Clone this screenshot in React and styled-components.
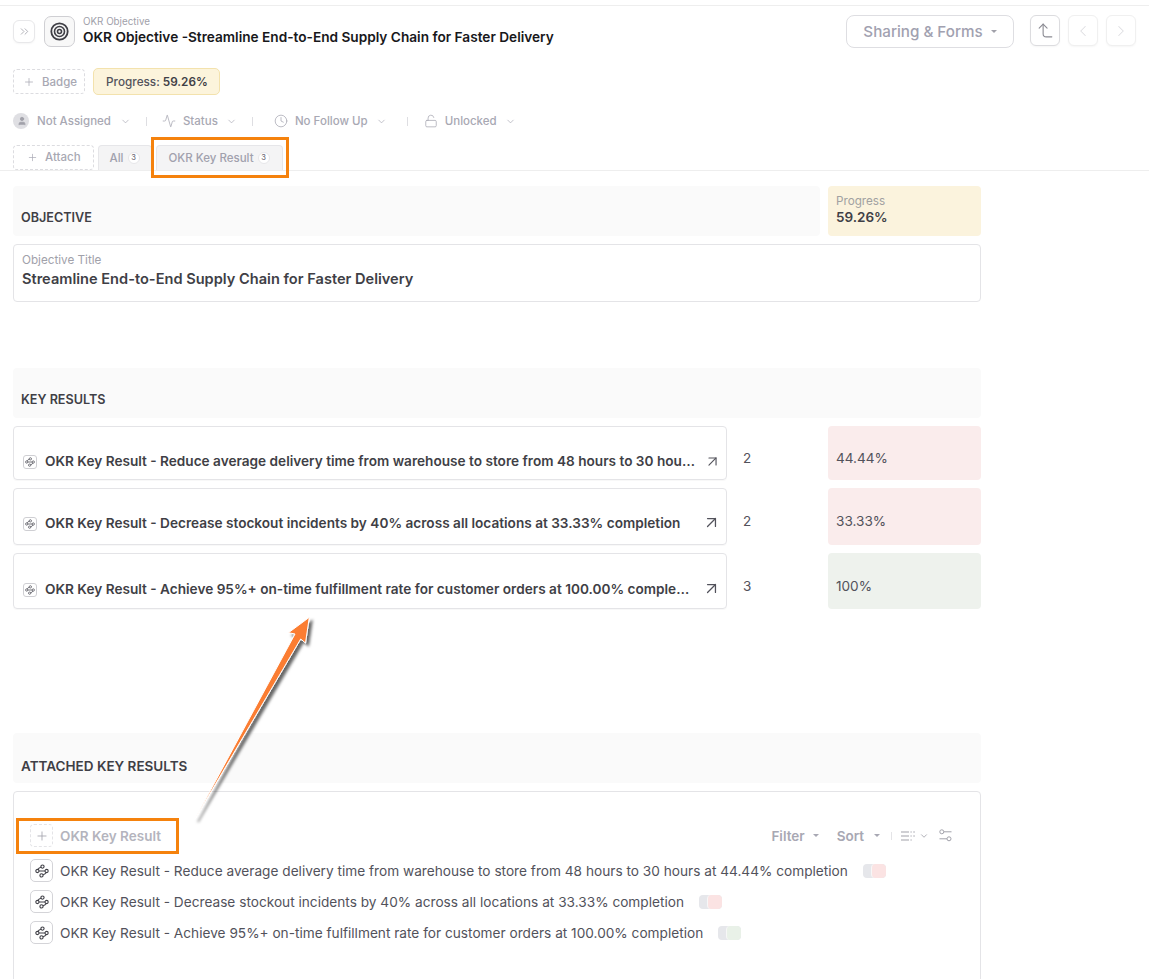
import React from 'react';
import styled, { createGlobalStyle } from 'styled-components';
import {
  Plus,
  ChevronDown,
  ChevronsRight,
  ChevronLeft,
  ChevronRight,
  Activity,
  Clock,
  LockOpen,
  ArrowUpRight,
  CornerLeftUp,
  User,
} from 'lucide-react';

const GlobalStyle = createGlobalStyle`
  * { box-sizing: border-box; }
  html, body { margin: 0; padding: 0; background: #fff; }
  body {
    font-family: Inter, "Liberation Sans", sans-serif;
    color: #3f3f46;
  }
`;

const Page = styled.div`
  position: relative;
  width: 1149px;
  height: 979px;
  overflow: hidden;
  padding-top: 5px;
`;

const Header = styled.header`
  border-top: 1px solid #eeeeee;
  border-bottom: 1px solid #eeeeee;
  height: 166px;
  padding: 0 11px 0 13px;
`;

const TopRow = styled.div`
  display: flex;
  align-items: flex-start;
  padding-top: 10px;
  height: 62px;
`;

const SquareBtn = styled.button`
  display: flex;
  align-items: center;
  justify-content: center;
  padding: 0;
  width: 30px;
  height: 31px;
  background: #fff;
  border: 1px solid ${p => (p.$faint ? '#f0f0f0' : '#dcdcdf')};
  border-radius: 6px;
  color: ${p => (p.$faint ? '#dedee2' : '#8b8b93')};
  box-shadow: 0 1px 2px rgba(0, 0, 0, 0.04);
`;

const Toggle = styled(SquareBtn)`
  margin-top: 4px;
  margin-right: 9px;
  width: 22px;
  height: 23px;
  color: #a1a1aa;
  border-color: #e8e8ea;
`;

const ObjectIcon = styled.div`
  display: flex;
  align-items: center;
  justify-content: center;
  width: 31px;
  height: 31px;
  border: 1px solid #cfcfd3;
  border-radius: 7px;
  margin-right: 8px;
  background: #f8f8f8;
`;

const TitleBlock = styled.div`
  flex: 1;
`;

const Crumb = styled.div`
  font-size: 9.8px;
  line-height: 12px;
  color: #a1a1aa;
`;

const Title = styled.h1`
  margin: -1px 0 0;
  font-size: 13.65px;
  line-height: 20px;
  font-weight: 600;
  color: #18181b;
`;

const Actions = styled.div`
  display: flex;
  align-items: flex-start;
  gap: 8px;
  margin-top: -1px;
  margin-right: 2px;
`;

const SharingBtn = styled.button`
  display: flex;
  align-items: center;
  justify-content: center;
  gap: 8px;
  width: 168px;
  height: 33px;
  margin-right: 8px;
  padding: 0;
  background: #fff;
  border: 1px solid #dedee2;
  border-radius: 8px;
  font: 500 15.2px Inter, sans-serif;
  color: #a1a1b0;
`;

const Caret = styled.span`
  display: inline-block;
  width: 0;
  height: 0;
  border-left: 3.5px solid transparent;
  border-right: 3.5px solid transparent;
  border-top: 3.5px solid ${p => p.$color || '#a1a1aa'};
`;

const BadgeRow = styled.div`
  display: flex;
  align-items: center;
  gap: 8px;
  height: 27px;
`;

const DashedBtn = styled.button`
  display: flex;
  align-items: center;
  gap: ${p => p.$gap}px;
  height: 25px;
  padding: 0 ${p => p.$pr}px ${p => p.$pb || 0}px ${p => p.$pl}px;
  background: #fff;
  border: 1px dashed #dcdce0;
  border-radius: 4px;
  font: 500 11.5px Inter, sans-serif;
  color: #a8a8b3;
`;

const ProgressBadge = styled.div`
  display: flex;
  align-items: center;
  height: 27px;
  padding: 0 11px 0 12px;
  gap: 3px;
  background: #fcf4dc;
  border: 1px solid #f3e2ad;
  border-radius: 5px;
  font-size: 11.75px;
  font-weight: 500;
  color: #52525b;
  b { font-weight: 600; color: #3f3f46; }
`;

const MetaRow = styled.div`
  display: flex;
  align-items: center;
  height: 20px;
  margin-top: 16px;
  font-size: 11.5px;
  font-weight: 500;
  color: #a8a8b3;
`;

const MetaItem = styled.div`
  display: flex;
  align-items: center;
  gap: ${p => p.$gap || 7}px;
  margin: 0 ${p => p.$mr || 0}px 0 ${p => p.$ml || 0}px;
  svg:last-child { margin-left: 1px; }
`;

const Avatar = styled.span`
  display: flex;
  align-items: center;
  justify-content: center;
  width: 16px;
  height: 16px;
  border-radius: 50%;
  background: #dfdfe3;
  color: #a1a1aa;
`;

const MetaSep = styled.span`
  width: 1px;
  height: 9px;
  margin: 0 15px;
  background: #dedee2;
`;

const TabRow = styled.div`
  display: flex;
  align-items: flex-end;
  gap: 4px;
  margin-top: 14px;
  height: 25px;
`;

const Tab = styled.div`
  position: relative;
  display: flex;
  align-items: center;
  gap: 4px;
  height: 25px;
  padding: 0 ${p => p.$px}px 1px;
  background: #f4f4f5;
  border: 1px solid #e6e6e9;
  border-bottom: none;
  border-radius: 4px 4px 0 0;
  font-size: 11.5px;
  font-weight: 500;
  color: #a1a1ad;
`;

const Count = styled.span`
  display: flex;
  align-items: center;
  justify-content: center;
  width: 12px;
  height: 12px;
  border: 1px solid #e7e7ea;
  border-radius: 50%;
  background: #fff;
  font-size: 7.5px;
  color: #71717a;
`;

const Highlight = styled.span`
  position: absolute;
  border: 3px solid #f5820d;
  pointer-events: none;
`;

const TabHighlight = styled(Highlight)`
  left: -6px;
  right: -7px;
  top: -9px;
  bottom: -8px;
`;

const Content = styled.main`
  width: 968px;
  margin-left: 13px;
`;

const ObjectiveRow = styled.div`
  display: flex;
  gap: 8px;
  margin-top: 15px;
`;

const SectionBar = styled.div`
  flex: 1;
  display: flex;
  align-items: center;
  height: 50px;
  padding: ${p => p.$pt || 12}px 8px 0;
  background: #fafafa;
  border-radius: 4px;
  font-size: ${p => p.$fs || 12.6}px;
  font-weight: 600;
  color: #3f3f46;
  margin-top: ${p => p.$top || 0}px;
`;

const ProgressCard = styled.div`
  width: 153px;
  height: 50px;
  padding: 8px;
  background: #fbf3dd;
  border-radius: 4px;
`;

const ProgressLabel = styled.div`
  font-size: 11.7px;
  line-height: 14px;
  color: #a1a1a1;
`;

const ProgressValue = styled.div`
  font-size: 13.5px;
  line-height: 18px;
  font-weight: 600;
  color: #3f3f46;
`;

const TitleField = styled.div`
  height: 58px;
  margin-top: 8px;
  padding: 8px 8px;
  border: 1px solid #e4e4e7;
  border-radius: 4px;
`;

const FieldLabel = styled.div`
  font-size: 11.7px;
  line-height: 14px;
  color: #a1a1aa;
`;

const FieldValue = styled.div`
  margin-top: 1px;
  font-size: 14.6px;
  line-height: 22px;
  font-weight: 600;
  color: #3f3f46;
`;

const ResultGrid = styled.div`
  display: grid;
  grid-template-columns: 714px 101px 153px;
  row-gap: 8px;
  margin-top: 8px;
`;

const ResultLink = styled.div`
  display: flex;
  align-items: flex-end;
  gap: 8px;
  height: ${p => p.$h}px;
  padding: 0 9px ${p => p.$pb}px;
  border: 1px solid #e4e4e7;
  border-radius: 4px;
  box-shadow: 0 1px 1px rgba(0, 0, 0, 0.03);
`;

const MiniIcon = styled.span`
  flex: none;
  display: flex;
  align-items: center;
  justify-content: center;
  width: 14px;
  height: 14px;
  border: 1px solid #cfcfd3;
  border-radius: 3px;
  color: #52525b;
`;

const ResultText = styled.span`
  flex: 1;
  min-width: 0;
  white-space: nowrap;
  overflow: hidden;
  text-overflow: ellipsis;
  font-size: 13.64px;
  line-height: 16px;
  font-weight: 600;
  color: #3f3f46;
`;

const OpenIcon = styled(ArrowUpRight)`
  flex: none;
  margin: 0 -4px -1px ${p => p.$ml}px;
  color: #52525b;
`;

const KrCount = styled.div`
  display: flex;
  align-items: center;
  padding: 9px 0 0 16px;
  font-size: 13.5px;
  color: #52525b;
`;

const ScoreCell = styled.div`
  display: flex;
  align-items: center;
  padding: 9px 8px 0;
  border-radius: 4px;
  font-size: 13.6px;
  color: #52525b;
  background: ${p => p.$bg};
`;

const Panel = styled.section`
  height: 200px;
  margin-top: 8px;
  padding: 27px 28px 0 4px;
  border: 1px solid #e4e4e7;
  border-radius: 4px;
`;

const Toolbar = styled.div`
  display: flex;
  align-items: center;
  justify-content: space-between;
  height: 33px;
`;

const AddResult = styled.div`
  position: relative;
  display: flex;
  align-items: center;
  gap: 7px;
  padding-left: 12px;
  font-size: 13.5px;
  font-weight: 600;
  color: #b4b4bd;
`;

const AddIcon = styled.span`
  display: flex;
  align-items: center;
  justify-content: center;
  width: 23px;
  height: 23px;
  border: 1px dashed #e4e4e7;
  border-radius: 4px;
  color: #a1a1aa;
`;

const AddHighlight = styled(Highlight)`
  left: -2px;
  top: -6px;
  width: 163px;
  height: 36px;
`;

const ToolbarRight = styled.div`
  display: flex;
  align-items: center;
  font-size: 13.5px;
  font-weight: 600;
  color: #a8a8b3;
`;

const ToolItem = styled.span`
  display: flex;
  align-items: center;
  gap: ${p => p.$gap || 8}px;
  margin-right: ${p => p.$mr || 0}px;
`;

const ToolSep = styled.span`
  width: 1px;
  height: 8px;
  margin: 0 9px 0 11px;
  background: #e4e4e7;
`;

const LinkedList = styled.ul`
  list-style: none;
  margin: 3px 0 0;
  padding: 0 0 0 12px;
`;

const LinkedRow = styled.li`
  display: flex;
  align-items: center;
  height: 31px;
  font-size: 13.66px;
  color: #52525b;
`;

const LinkedIcon = styled.span`
  flex: none;
  display: flex;
  align-items: center;
  justify-content: center;
  width: 23px;
  height: 23px;
  margin-right: 7px;
  border: 1px solid #d4d4d8;
  border-radius: 5px;
  color: #3f3f46;
`;

const Pill = styled.span`
  display: flex;
  width: 23px;
  height: 14px;
  margin-left: 15px;
  border-radius: 4px;
  overflow: hidden;
  background: #e6e7eb;
`;

const PillFill = styled.span`
  width: 15px;
  margin-left: auto;
  border-left: 1px solid #f7f7f7;
  border-radius: 4px;
  background: ${p => p.$bg};
`;

const ArrowOverlay = styled.svg`
  position: absolute;
  left: 185px;
  top: 605px;
  pointer-events: none;
`;

function TargetIcon() {
  return (
    <svg width="19" height="19" viewBox="0 0 19 19" fill="none" stroke="#3f3f46">
      <circle cx="9.5" cy="9.5" r="8.2" strokeWidth="1.8" />
      <circle cx="9.5" cy="9.5" r="5" strokeWidth="1.6" />
      <circle cx="9.5" cy="9.5" r="2" strokeWidth="1.6" />
    </svg>
  );
}

// small snake of four nodes, used for key results
function NodesIcon({ size = 14 }) {
  return (
    <svg width={size} height={size} viewBox="0 0 14 14" fill="none" stroke="currentColor" strokeWidth="1.1">
      <circle cx="7.5" cy="2.6" r="1.6" />
      <circle cx="2.4" cy="7" r="1.6" />
      <circle cx="11.6" cy="7" r="1.6" />
      <circle cx="6.5" cy="11.4" r="1.6" />
      <path d="M4 7h6M5.9 3.2C4.4 3.6 3.4 4.4 2.9 5.5M11.1 8.5C10.6 9.6 9.6 10.4 8.1 10.8" />
    </svg>
  );
}

function ListIcon() {
  return (
    <svg width="14" height="10" viewBox="0 0 14 10" fill="none" stroke="#a1a1aa" strokeWidth="1.1">
      <path d="M0 1h8M0 5h8M0 9h8" />
      <path d="M9.5 1h1.2M12.3 1h1.5M9.5 5h1.2M12.3 5h1.5M9.5 9h1.2" />
    </svg>
  );
}

function TuneIcon() {
  return (
    <svg width="13" height="13" viewBox="0 0 13 13" fill="none" stroke="#a1a1aa" strokeWidth="1">
      <circle cx="2.8" cy="2.8" r="2" />
      <path d="M5 2.8h7.5M0.5 9.8h7.5" />
      <circle cx="10" cy="9.8" r="2" />
    </svg>
  );
}

const results = [
  {
    title: 'OKR Key Result - Reduce average delivery time from warehouse to store from 48 hours to 30 hours at 44.44% completion',
    count: 2, score: '44.44%', bg: '#faecec', fill: '#fbe3e3', h: 54, pb: 10, arrow: 17, arrowMl: -3,
  },
  {
    title: 'OKR Key Result - Decrease stockout incidents by 40% across all locations at 33.33% completion',
    count: 2, score: '33.33%', bg: '#faecec', fill: '#fbe3e3', h: 57, pb: 13, arrow: 19, arrowMl: 0,
  },
  {
    title: 'OKR Key Result - Achieve 95%+ on-time fulfillment rate for customer orders at 100.00% completion',
    count: 3, score: '100%', bg: '#eef2ed', fill: '#e9f1e8', h: 56, pb: 11, arrow: 19, arrowMl: 0,
  },
];

export default function App() {
  return (
    <Page>
      <GlobalStyle />
      <Header>
        <TopRow>
          <Toggle><ChevronsRight size={13} strokeWidth={1.5} /></Toggle>
          <ObjectIcon><TargetIcon /></ObjectIcon>
          <TitleBlock>
            <Crumb>OKR Objective</Crumb>
            <Title>OKR Objective -Streamline End-to-End Supply Chain for Faster Delivery</Title>
          </TitleBlock>
          <Actions>
            <SharingBtn>Sharing &amp; Forms <Caret /></SharingBtn>
            <SquareBtn><CornerLeftUp size={19} strokeWidth={1.4} /></SquareBtn>
            <SquareBtn $faint><ChevronLeft size={18} strokeWidth={1.4} /></SquareBtn>
            <SquareBtn $faint><ChevronRight size={18} strokeWidth={1.4} /></SquareBtn>
          </Actions>
        </TopRow>

        <BadgeRow>
          <DashedBtn $pl={9} $pr={7} $gap={7}><Plus size={12} strokeWidth={1.5} /> Badge</DashedBtn>
          <ProgressBadge>Progress: <b>59.26%</b></ProgressBadge>
        </BadgeRow>

        <MetaRow>
          <MetaItem $gap={8}>
            <Avatar><User size={10} fill="currentColor" /></Avatar>
            Not Assigned <ChevronDown size={11} strokeWidth={1.5} />
          </MetaItem>
          <MetaSep />
          <MetaItem>
            <Activity size={14} strokeWidth={1.3} />
            Status <ChevronDown size={11} strokeWidth={1.5} />
          </MetaItem>
          <MetaSep />
          <MetaItem $ml={6} $mr={5}>
            <Clock size={14} strokeWidth={1.3} />
            No Follow Up <ChevronDown size={11} strokeWidth={1.5} />
          </MetaItem>
          <MetaSep />
          <MetaItem $ml={1}>
            <LockOpen size={14} strokeWidth={1.3} />
            Unlocked <ChevronDown size={11} strokeWidth={1.5} />
          </MetaItem>
        </MetaRow>

        <TabRow>
          <DashedBtn $pl={13} $pr={12} $gap={7} $pb={1}><Plus size={11} strokeWidth={1.5} /> Attach</DashedBtn>
          <Tab $px={11}>All <Count>3</Count></Tab>
          <Tab $px={12}>
            OKR Key Result <Count>3</Count>
            <TabHighlight />
          </Tab>
        </TabRow>
      </Header>

      <Content>
        <ObjectiveRow>
          <SectionBar>OBJECTIVE</SectionBar>
          <ProgressCard>
            <ProgressLabel>Progress</ProgressLabel>
            <ProgressValue>59.26%</ProgressValue>
          </ProgressCard>
        </ObjectiveRow>

        <TitleField>
          <FieldLabel>Objective Title</FieldLabel>
          <FieldValue>Streamline End-to-End Supply Chain for Faster Delivery</FieldValue>
        </TitleField>

        <SectionBar $top={66}>KEY RESULTS</SectionBar>

        <ResultGrid>
          {results.map(r => (
            <React.Fragment key={r.title}>
              <ResultLink $h={r.h} $pb={r.pb}>
                <MiniIcon><NodesIcon size={10} /></MiniIcon>
                <ResultText>{r.title}</ResultText>
                <OpenIcon size={r.arrow} strokeWidth={1.6} $ml={r.arrowMl} />
              </ResultLink>
              <KrCount>{r.count}</KrCount>
              <ScoreCell $bg={r.bg}>{r.score}</ScoreCell>
            </React.Fragment>
          ))}
        </ResultGrid>

        <SectionBar $top={124} $pt={16} $fs={13.5}>ATTACHED KEY RESULTS</SectionBar>

        <Panel>
          <Toolbar>
            <AddResult>
              <AddIcon><Plus size={14} strokeWidth={1.4} /></AddIcon>
              OKR Key Result
              <AddHighlight />
            </AddResult>
            <ToolbarRight>
              <ToolItem $mr={18}>Filter <Caret $color="#a8a8b3" /></ToolItem>
              <ToolItem $gap={10}>Sort <Caret $color="#a8a8b3" /></ToolItem>
              <ToolSep />
              <ToolItem $mr={10} $gap={4}><ListIcon /><ChevronDown size={10} color="#a1a1aa" /></ToolItem>
              <TuneIcon />
            </ToolbarRight>
          </Toolbar>
          <LinkedList>
            {results.map(r => (
              <LinkedRow key={r.title}>
                <LinkedIcon><NodesIcon /></LinkedIcon>
                {r.title}
                <Pill><PillFill $bg={r.fill} /></Pill>
              </LinkedRow>
            ))}
          </LinkedList>
        </Panel>
      </Content>

      <ArrowOverlay width="140" height="225" viewBox="185 605 140 225">
        <defs>
          <filter id="arrowShadow" x="-30%" y="-30%" width="160%" height="160%">
            <feDropShadow dx="3" dy="3" stdDeviation="1.5" floodColor="#000" floodOpacity="0.6" />
          </filter>
        </defs>
        <path
          d="M195 819 L295 634 L288.5 632.7 L309.3 617.3 L305.5 643 L300.7 639 Z"
          fill="#fb7d33"
          stroke="#fff"
          strokeWidth="1"
          filter="url(#arrowShadow)"
        />
      </ArrowOverlay>
    </Page>
  );
}
